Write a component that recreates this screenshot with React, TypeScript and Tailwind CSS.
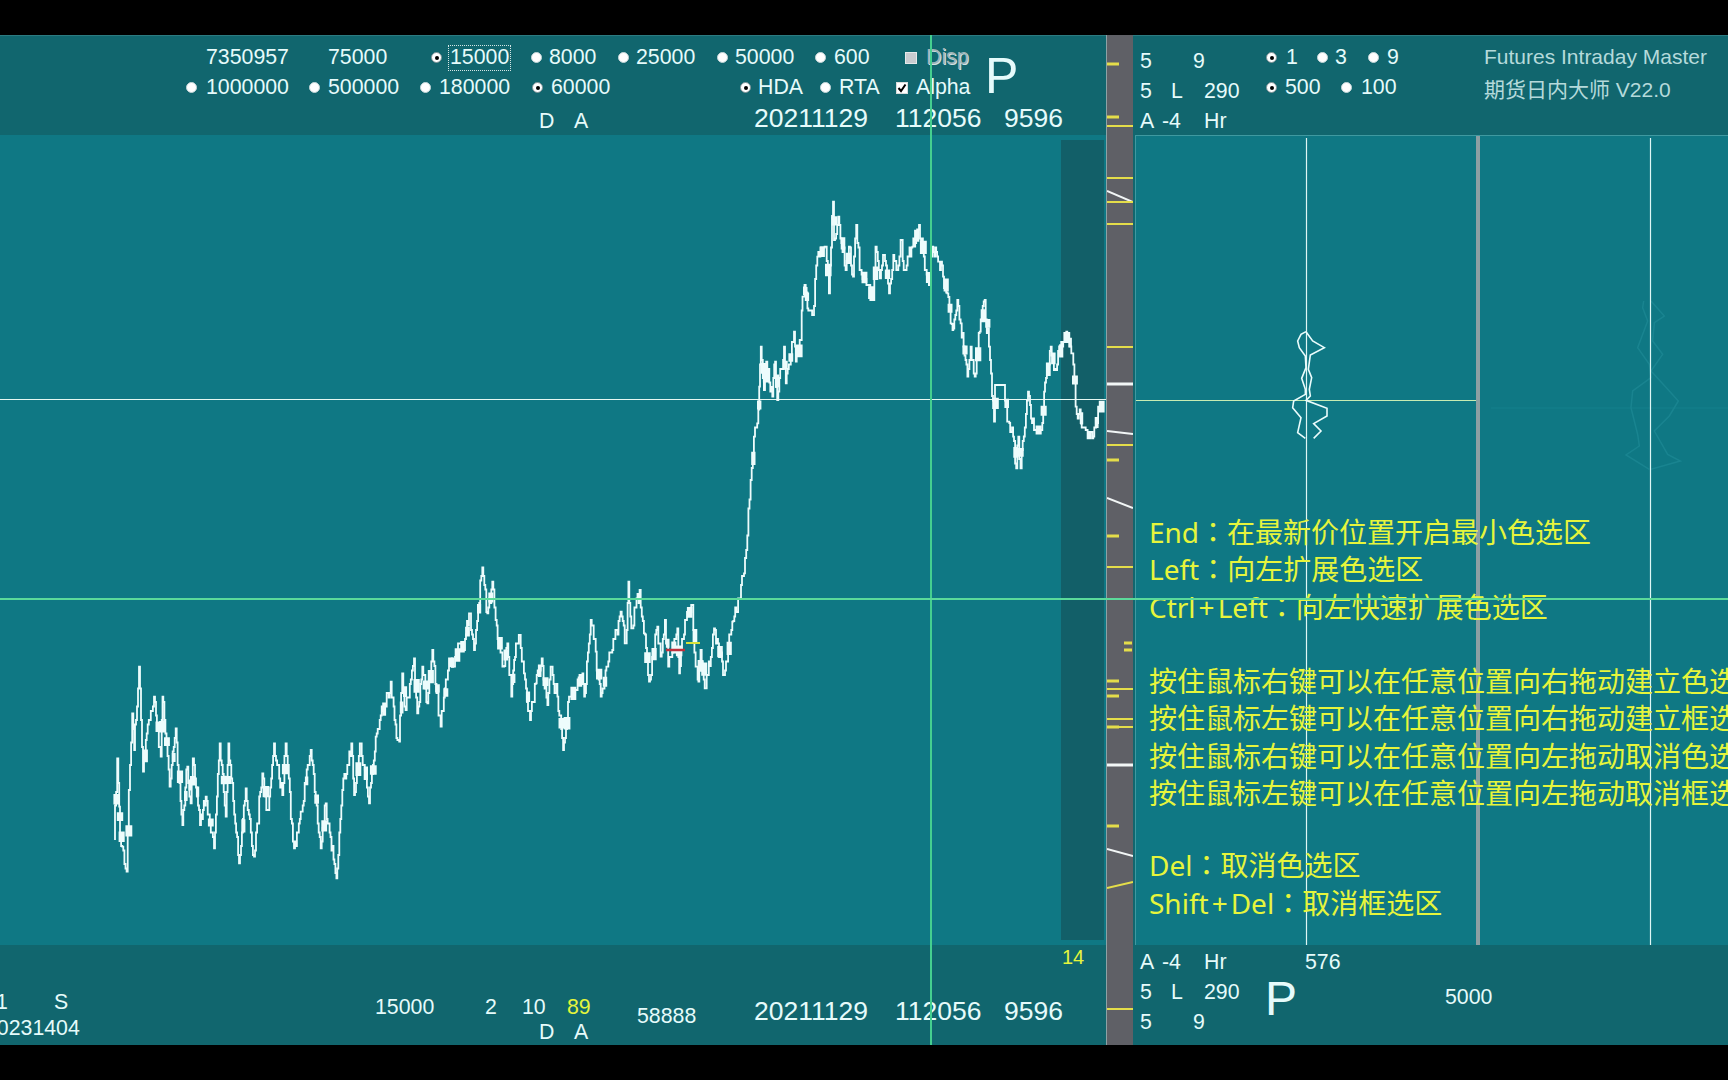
import React from 'react';

const sans = "font-['Liberation_Sans',Arial,sans-serif]";

// price trace key points, read off the chart in three stretches
const part1: number[][] = [[45,600],[55,355],[60,500],[60,560],[70,620],[83,695],[90,450],[100,220],[105,330],[120,80],[132,395],[140,300],[165,170],[185,350],[190,170],[212,440],[230,265],[250,555],[265,380],[275,490],[282,355],[303,555],[320,470],[345,625],[362,310],[380,530],[388,310],[420,670],[440,445],[465,650],[490,400],[505,510],[525,310],[550,465],[560,310],[585,625],[605,515],[635,330],[665,625],[680,490],[712,715],[730,450],[757,310],[765,465],[785,310],[810,490],[830,290],[875,125],[895,300]];
const part2: number[][] = [[0,575],[10,370],[20,480],[45,325],[55,490],[70,350],[85,460],[100,300],[125,530],[150,325],[165,350],[180,280],[195,300],[210,190],[225,300],[250,52],[265,190],[280,95],[290,210],[310,350],[325,280],[337,440],[345,330],[362,255],[375,370],[393,510],[410,400],[428,325],[445,465],[455,350],[475,440],[492,600],[510,440],[530,420],[550,370],[555,440],[575,210],[590,305],[605,440],[625,350],[640,300],[665,185],[680,280],[688,95],[697,235],[722,120],[735,250],[750,395],[775,230],[785,320],[798,210],[808,350],[835,235],[840,370],[858,210],[880,165],[890,350],[898,395],[905,300],[920,415],[945,235],[975,375],[1000,215],[1020,145],[1035,70],[1042,0]];
const part3: number[][] = [[35,870],[45,740],[55,700],[60,590],[65,470],[75,600],[82,515],[100,620],[108,515],[115,630],[135,470],[140,580],[165,425],[170,515],[185,450],[190,320],[197,285],[205,355],[222,375],[235,200],[260,170],[270,310],[282,35],[285,150],[298,80],[320,240],[330,170],[342,260],[352,105],[362,240],[385,285],[403,330],[410,170],[423,265],[435,195],[450,310],[463,195],[475,240],[485,150],[497,240],[520,170],[540,105],[560,240],[570,285],[580,170],[600,215],[612,260],[625,310],[635,400],[640,420],[655,330],[665,400],[685,560],[695,470],[707,560],[722,425],[737,330],[750,470],[765,695],[768,585],[795,585],[805,695],[822,740],[832,835],[838,740],[845,835],[867,605],[885,720],[907,720],[915,605],[935,470],[945,540],[982,425],[1000,490],[1010,650],[1040,720],[1060,745],[1080,650],[1090,650]];

const keys: number[][] = [
  ...part1.map(([x, y]) => [100 + x / 3, 640 + y / 3]),
  ...part2.map(([x, y]) => [400 + x / 3, 550 + y / 3]),
  ...part3.map(([x, y]) => [740 + x / 3, 190 + y / 3]),
];

function buildTrace() {
  let seed = 20211129;
  const rnd = () => {
    seed = (seed * 1664525 + 1013904223) % 4294967296;
    return seed / 4294967296;
  };
  let d = `M${keys[0][0]} ${keys[0][1]}`;
  let blobs = '';
  for (let i = 1; i < keys.length; i++) {
    const [x0, y0] = keys[i - 1];
    const [x1, y1] = keys[i];
    const steps = Math.max(1, Math.round(x1 - x0));
    const lo = Math.min(y0, y1);
    const hi = Math.max(y0, y1);
    for (let s = 1; s <= steps; s++) {
      const t = s / steps;
      const x = x0 + (x1 - x0) * t;
      const base = y0 + (y1 - y0) * t;
      const raw = Math.round((base + (rnd() - 0.5) * 16) / 4.5) * 4.5;
      const y = s === steps ? y1 : Math.min(hi, Math.max(lo, raw));
      d += `V${y.toFixed(1)}H${x.toFixed(1)}`;
    }
    // the dense spots where ticks stack into solid blocks
    if (rnd() < 0.5) {
      const w = 3 + rnd() * 4;
      const h = 8 + rnd() * 6;
      const bx = (x0 + x1) / 2;
      const by = (y0 + y1) / 2;
      blobs += `M${(bx - w / 2).toFixed(1)} ${(by - h / 2).toFixed(1)}h${w.toFixed(1)}v${h.toFixed(1)}h${(-w).toFixed(1)}z`;
    }
  }
  return { d, blobs };
}
const trace = buildTrace();

const curve = (pts: number[][]) => pts.map(([x, y]) => `${1270 + x / 3},${300 + y / 3}`).join(' ');

// marks on the grey strip: [y1, y2, x1, x2, colour, width]
const Y = '#e4dd4a';
const W = '#f2f6f6';
const marks: [number, number, number, number, string, number][] = [
  [64, 64, 1, 13, Y, 3], [117, 117, 1, 13, Y, 3], [126, 126, 1, 27, Y, 2],
  [178, 178, 1, 27, Y, 2], [191, 202, 1, 27, W, 2], [202, 202, 1, 27, Y, 2], [224, 224, 1, 27, Y, 2],
  [347, 347, 1, 27, Y, 2], [384, 384, 1, 27, W, 3], [431, 434, 1, 27, W, 2], [445, 445, 1, 27, Y, 2],
  [460, 460, 1, 13, Y, 3], [498, 508, 1, 27, W, 2], [536, 536, 1, 13, Y, 3], [567, 567, 1, 27, Y, 2],
  [643, 643, 18, 26, Y, 3], [650, 650, 18, 26, Y, 3], [681, 681, 1, 13, Y, 3], [689, 689, 1, 27, Y, 2],
  [696, 696, 1, 13, Y, 3], [719, 719, 1, 27, Y, 2], [727, 727, 1, 27, Y, 2], [727, 727, 1, 13, Y, 3],
  [765, 765, 1, 27, W, 3], [826, 826, 1, 13, Y, 3], [849, 856, 1, 27, W, 2], [888, 882, 1, 27, Y, 2],
  [1009, 1009, 1, 27, Y, 2],
];

const Radio = ({ on }: { on?: boolean }) => (
  <span className={`flex h-[11px] w-[11px] shrink-0 items-center justify-center rounded-full border bg-white ${on ? 'border-[#7f9296]' : 'border-[#c4d6d8]'}`}>
    {on && <span className="h-[4px] w-[4px] rounded-full bg-black" />}
  </span>
);

// fullwidth colon, centred in its box as in the picture
const Colon = () => <span className="font-['Noto_Sans_CJK_TC',sans-serif] leading-[0]">：</span>;

const App: React.FC = () => {
  return (
    <div className={`relative flex h-[1080px] w-[1728px] flex-col overflow-hidden bg-black text-[21.3px] leading-none text-[#e6fbfb] ${sans}`}>
      <div className="h-[35px] shrink-0" />
      <div className="flex h-[1010px] shrink-0">
        {/* left column */}
        <div className="flex w-[1106px] shrink-0 flex-col">
          <div className="relative h-[100px] border-t border-[#2c7b81] bg-[#11666e] pt-[7px]">
            <div className="flex h-[30px] items-center pl-[206px]">
              <span className="w-[122px]">7350957</span>
              <span className="w-[103px]">75000</span>
              <span className="flex w-[100px] items-center gap-[6px]">
                <Radio on />
                <span className="-my-[2px] border border-dotted border-[#d5e6e6] px-[1px] py-[1px]">15000</span>
              </span>
              <span className="flex w-[87px] items-center gap-[7px]"><Radio />8000</span>
              <span className="flex w-[99px] items-center gap-[7px]"><Radio />25000</span>
              <span className="flex w-[98px] items-center gap-[7px]"><Radio />50000</span>
              <span className="flex w-[90px] items-center gap-[8px]"><Radio />600</span>
              <span className="flex items-center gap-[9px] text-[#9fb4b8] [text-shadow:1px_1px_0_#d4e2e4]">
                <span className="h-[12px] w-[12px] border border-[#e6e9ea] bg-[#c9ccd0]" />Disp
              </span>
            </div>
            <div className="flex h-[30px] items-center pl-[186px]">
              <span className="flex w-[123px] items-center gap-[9px]"><Radio />1000000</span>
              <span className="flex w-[111px] items-center gap-[8px]"><Radio />500000</span>
              <span className="flex w-[112px] items-center gap-[8px]"><Radio />180000</span>
              <span className="flex w-[208px] items-center gap-[8px]"><Radio on />60000</span>
              <span className="flex w-[80px] items-center gap-[7px]"><Radio on />HDA</span>
              <span className="flex w-[76px] items-center gap-[8px]"><Radio />RTA</span>
              <span className="flex items-center gap-[8px]">
                <span className="flex h-[12px] w-[12px] items-center justify-center border border-[#d8dcdc] bg-white">
                  <svg viewBox="0 0 10 10" className="h-[10px] w-[10px]">
                    <path d="M1.5 5 L4 8 L8.5 1.5" fill="none" stroke="#000" strokeWidth="2" />
                  </svg>
                </span>
                Alpha
              </span>
            </div>
            <div className="flex h-[31px] items-center pl-[539px]">
              <span className="w-[35px] pt-[6px]">D</span>
              <span className="w-[180px] pt-[6px]">A</span>
              <span className="w-[141px] text-[26.5px]">20211129</span>
              <span className="w-[109px] text-[26.5px]">112056</span>
              <span className="text-[26.5px]">9596</span>
            </div>
            <span className="absolute left-[985px] top-[22px] text-[50px] leading-[36px]">P</span>
          </div>

          <div className="relative h-[810px] overflow-hidden bg-[#0f7884]">
            <div className="absolute bottom-[5px] left-[1061px] top-[5px] w-[43px] bg-[#125f68]" />
            <svg className="absolute inset-0 h-[810px] w-[1106px]" viewBox="0 135 1106 810">
              <line x1="0" y1="399.5" x2="1106" y2="399.5" stroke="#e6f8f2" strokeWidth="1" />
              <path d={trace.d} fill="none" stroke="#edfcfc" strokeWidth="1.8" />
              <path d={trace.blobs} fill="#edfcfc" />
              <line x1="666" y1="650" x2="685" y2="650" stroke="#c0303c" strokeWidth="2.5" />
              <line x1="686" y1="643" x2="700" y2="643" stroke="#d8e23a" strokeWidth="2" />
            </svg>
          </div>

          <div className="flex h-[100px] bg-[#11666e]">
            <div className="w-[375px] shrink-0 pt-[45px]">
              <div className="flex h-[26px] items-center">
                <span className="-ml-[4px] w-[58px]">1</span>
                <span>S</span>
              </div>
              <div className="flex h-[25px] items-center">
                <span className="-ml-[15px]">20231404</span>
              </div>
            </div>
            <div className="w-[262px] shrink-0 pt-[50px]">
              <div className="flex h-[25px] items-center">
                <span className="w-[110px]">15000</span>
                <span className="w-[37px]">2</span>
                <span className="w-[45px]">10</span>
                <span className="text-[#e4f53c]">89</span>
              </div>
              <div className="flex h-[25px] items-center pl-[164px]">
                <span className="w-[35px]">D</span>
                <span>A</span>
              </div>
            </div>
            <div className="w-[117px] shrink-0 pt-[59px]">
              <div className="flex h-[25px] items-center">58888</div>
            </div>
            <div className="flex-1">
              <div className="flex h-[24px] items-center pl-[308px] text-[20px] text-[#e4f53c]">14</div>
              <div className="mt-[27px] flex h-[30px] items-center text-[26.5px]">
                <span className="w-[141px]">20211129</span>
                <span className="w-[109px]">112056</span>
                <span>9596</span>
              </div>
            </div>
          </div>
        </div>

        {/* grey price strip */}
        <div className="w-[27px] shrink-0 border-l border-[#8da2a6] bg-[#5f6066]">
          <svg className="h-[1010px] w-[26px]" viewBox="1 35 26 1010">
            {marks.map(([y1, y2, x1, x2, c, w], i) => (
              <line key={i} x1={x1} y1={y1} x2={x2} y2={y2} stroke={c} strokeWidth={w} />
            ))}
          </svg>
        </div>

        {/* right column */}
        <div className="flex flex-1 flex-col bg-[#11666e]">
          <div className="flex h-[100px] border-t border-[#2c7b81]">
            <div className="w-[133px] shrink-0 pl-[7px] pt-[11px]">
              <div className="flex h-[30px] items-center">
                <span className="w-[53px]">5</span>
                <span>9</span>
              </div>
              <div className="flex h-[30px] items-center">
                <span className="w-[31px]">5</span>
                <span className="w-[33px]">L</span>
                <span>290</span>
              </div>
              <div className="flex h-[30px] items-center">
                <span className="w-[22px]">A</span>
                <span className="w-[42px]">-4</span>
                <span>Hr</span>
              </div>
            </div>
            <div className="w-[218px] shrink-0 pt-[7px]">
              <div className="flex h-[30px] items-center">
                <span className="flex w-[51px] items-center gap-[9px]"><Radio on />1</span>
                <span className="flex w-[51px] items-center gap-[7px]"><Radio />3</span>
                <span className="flex items-center gap-[8px]"><Radio />9</span>
              </div>
              <div className="flex h-[30px] items-center">
                <span className="flex w-[75px] items-center gap-[8px]"><Radio on />500</span>
                <span className="flex items-center gap-[9px]"><Radio />100</span>
              </div>
            </div>
            <div className={`flex-1 pt-[5px] text-[21px] text-[#b5dadb] font-['Liberation_Sans','Noto_Sans_CJK_SC',sans-serif]`}>
              <div className="flex h-[30px] items-center whitespace-nowrap">Futures Intraday Master</div>
              <div className="mt-[3px] flex h-[30px] items-center whitespace-nowrap">期货日内大师 V22.0</div>
            </div>
          </div>

          <div className="relative ml-[2px] h-[810px] overflow-hidden border-l border-t border-[#3f99a0] bg-[#0f7884]">
            <svg className="absolute left-0 top-0 h-[810px] w-[593px]" viewBox="1135 135 593 810">
              <line x1="1490" y1="407" x2="1728" y2="407" stroke="#14808c" strokeWidth="1" />
              <polyline fill="none" stroke="#198490" strokeWidth="1.5" points={curve([[1118,0],[1115,20],[1130,60],[1100,140],[1135,190],[1140,230],[1085,270],[1080,320],[1100,400],[1105,435],[1065,462],[1135,505]])} />
              <polyline fill="none" stroke="#198490" strokeWidth="1.5" points={curve([[1140,0],[1180,45],[1150,65],[1145,120],[1175,160],[1140,210],[1195,270],[1222,300],[1195,345],[1150,390],[1190,460],[1228,480],[1140,505]])} />
              <line x1="1305.5" y1="137" x2="1305.5" y2="945" stroke="#dff6f4" strokeWidth="1.2" />
              <line x1="1477" y1="135" x2="1477" y2="945" stroke="#8c9fa3" strokeWidth="4" />
              <line x1="1649.5" y1="137" x2="1649.5" y2="945" stroke="#dff6f4" strokeWidth="1.2" />
              <line x1="1135" y1="399.5" x2="1475" y2="399.5" stroke="#c7ecb2" strokeWidth="1" />
              <polyline fill="none" stroke="#eafcfc" strokeWidth="1.6" points={curve([[105,92],[125,120],[160,140],[118,162],[112,205],[122,230],[115,265],[118,285],[105,298],[168,322],[168,345],[128,368],[150,390],[128,412]])} />
              <polyline fill="none" stroke="#eafcfc" strokeWidth="1.6" points={curve([[105,92],[90,100],[80,120],[85,140],[103,165],[105,200],[92,232],[103,265],[103,280],[68,300],[65,320],[90,350],[80,395],[103,412]])} />
            </svg>
            <div className="absolute left-[13px] top-[378px] whitespace-nowrap font-['Noto_Sans','Noto_Sans_CJK_SC',sans-serif] text-[28px] leading-[37.3px] text-[#e6f53c]">
              <div>End<Colon />在最新价位置开启最小色选区</div>
              <div>Left<Colon />向左扩展色选区</div>
              <div>Ctrl<span className="mx-[3px]">+</span>Left<Colon />向左快速扩展色选区</div>
              <div className="h-[37.3px]" />
              <div>按住鼠标右键可以在任意位置向右拖动建立色选区</div>
              <div>按住鼠标左键可以在任意位置向右拖动建立框选区</div>
              <div>按住鼠标右键可以在任意位置向左拖动取消色选区</div>
              <div>按住鼠标左键可以在任意位置向左拖动取消框选区</div>
              <div className="h-[35px]" />
              <div>Del<Colon />取消色选区</div>
              <div>Shift<span className="mx-[3px]">+</span>Del<Colon />取消框选区</div>
            </div>
          </div>

          <div className="flex h-[100px] pt-[3px]">
            <div className="w-[132px] shrink-0 pl-[7px]">
              <div className="flex h-[30px] items-center">
                <span className="w-[22px]">A</span>
                <span className="w-[42px]">-4</span>
                <span>Hr</span>
              </div>
              <div className="flex h-[30px] items-center">
                <span className="w-[31px]">5</span>
                <span className="w-[33px]">L</span>
                <span>290</span>
              </div>
              <div className="flex h-[30px] items-center">
                <span className="w-[53px]">5</span>
                <span>9</span>
              </div>
            </div>
            <div className="w-[180px] shrink-0">
              <div className="flex h-[30px] items-center pl-[40px]">576</div>
              <div className="flex h-[42px] items-center text-[48px]">P</div>
            </div>
            <div className="pt-[37px]">
              <div className="flex h-[25px] items-center">5000</div>
            </div>
          </div>
        </div>
      </div>

      {/* crosshair */}
      <div className="absolute bottom-[35px] left-[930px] top-[35px] w-[2px] bg-[#45cf8f]" />
      <div className="absolute left-0 top-[598px] h-[2px] w-[1728px] bg-[#5bda9a]" />
    </div>
  );
};

export default App;
